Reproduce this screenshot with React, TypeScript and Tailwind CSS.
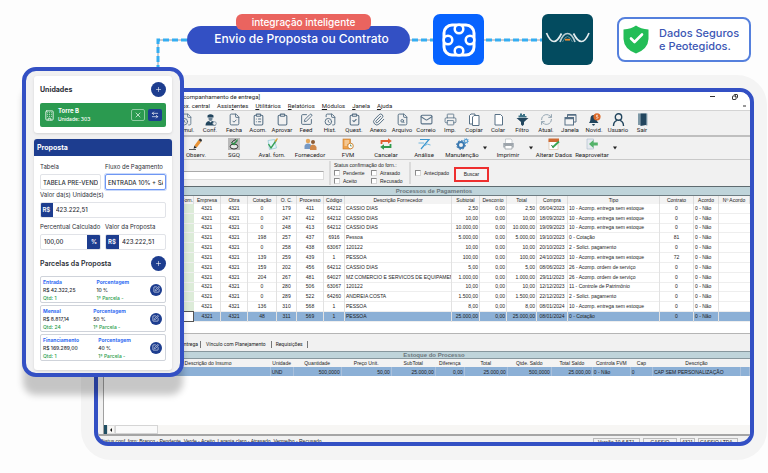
import { ArrowLeftRight, Building, Clipboard, ClipboardCheck, ClipboardList, Copy, FileCheck, FileClock, FileSearch, Mail, Paperclip, Plus, Printer, RefreshCw, SquarePen, UserRound, X } from "lucide-react";

const rows = [
    ["4321", "4321", "0", "179", "411", "64212", "CASSIO DIAS", "2,50", "0,00", "2,50", "06/04/2023", "10 - Acomp. entrega sem estoque", "0", "0 - Não"],
    ["4321", "4321", "0", "247", "412", "64212", "CASSIO DIAS", "10,00", "0,00", "10,00", "18/09/2023", "10 - Acomp. entrega sem estoque", "0", "0 - Não"],
    ["4321", "4321", "0", "248", "413", "64212", "CASSIO DIAS", "10.000,00", "0,00", "10.000,00", "19/09/2023", "10 - Acomp. entrega sem estoque", "0", "0 - Não"],
    ["4321", "4321", "198", "257", "437", "6916", "Pessoa", "5.000,00", "0,00", "5.000,00", "19/10/2023", "0 - Cotação", "81", "0 - Não"],
    ["4321", "4321", "0", "258", "438", "63067", "120122", "10,00", "0,00", "10,00", "20/10/2023", "2 - Solict. pagamento", "0", "0 - Não"],
    ["4321", "4321", "139", "259", "439", "1", "PESSOA", "100,00", "0,00", "100,00", "24/10/2023", "10 - Acomp. entrega sem estoque", "72", "0 - Não"],
    ["4321", "4321", "159", "202", "456", "64212", "CASSIO DIAS", "5,00", "0,00", "5,00", "08/06/2023", "26 - Acomp. ordem de serviço", "0", "0 - Não"],
    ["4321", "4321", "204", "267", "481", "64027", "MZ COMERCIO E SERVICOS DE EQUIPAMEN", "1.000,00", "0,00", "1.000,00", "29/11/2023", "26 - Acomp. ordem de serviço", "0", "0 - Não"],
    ["4321", "4321", "0", "280", "506", "63067", "120122", "10,00", "0,00", "10,00", "12/12/2023", "11 - Controle de Patrimônio", "0", "0 - Não"],
    ["4321", "4321", "0", "289", "522", "64260", "ANDREIA COSTA", "1.500,00", "0,00", "1.500,00", "22/12/2023", "2 - Solict. pagamento", "0", "0 - Não"],
    ["4321", "4321", "136", "310", "568", "1", "PESSOA", "8,00", "0,00", "8,00", "08/01/2024", "10 - Acomp. entrega sem estoque", "0", "0 - Não"],
    ["4321", "4321", "48", "311", "569", "1", "PESSOA", "25.000,00", "0,00", "25.000,00", "08/01/2024", "0 - Cotação", "0", "0 - Não"],
];

const columns = [
    { name: "Forn.", width: "w-[95px]", align: "text-right" },
    { name: "Empresa", width: "w-[27px]", align: "text-center" },
    { name: "Obra", width: "w-[27px]", align: "text-center" },
    { name: "Cotação", width: "w-[29px]", align: "text-center" },
    { name: "O. C.", width: "w-[20px]", align: "text-center" },
    { name: "Processo", width: "w-[27px]", align: "text-center" },
    { name: "Código", width: "w-[21px]", align: "text-center" },
    { name: "Descrição Fornecedor", width: "w-[107px]", align: "text-left" },
    { name: "Subtotal", width: "w-[28px]", align: "text-right" },
    { name: "Desconto", width: "w-[27px]", align: "text-right" },
    { name: "Total", width: "w-[30px]", align: "text-right" },
    { name: "Compra", width: "w-[31px]", align: "text-center" },
    { name: "Tipo", width: "w-[92px]", align: "text-left" },
    { name: "Contrato", width: "w-[34px]", align: "text-center" },
    { name: "Acordo", width: "w-[25px]", align: "text-left" },
    { name: "Nº Acordo", width: "w-[31px]", align: "text-left" },
];

const stock = [
    { name: "", value: "", width: "w-[42px]", align: "text-left" },
    { name: "Descrição do Insumo", value: "", width: "w-[124px]", align: "text-left" },
    { name: "Unidade", value: "UND", width: "w-[23px]", align: "text-left" },
    { name: "Quantidade", value: "500,0000", width: "w-[48px]", align: "text-right" },
    { name: "Preço Unit.", value: "50,00", width: "w-[50px]", align: "text-right" },
    { name: "SubTotal", value: "25.000,00", width: "w-[44px]", align: "text-right" },
    { name: "Diferença", value: "0,00", width: "w-[29px]", align: "text-right" },
    { name: "Total", value: "25.000,00", width: "w-[43px]", align: "text-right" },
    { name: "Qtde. Saldo", value: "500,0000", width: "w-[44px]", align: "text-right" },
    { name: "Total Saldo", value: "25.000,00", width: "w-[41px]", align: "text-right" },
    { name: "Controla FVM", value: "0 - Não", width: "w-[38px]", align: "text-left" },
    { name: "Cap", value: "0", width: "w-[22px]", align: "text-left" },
    { name: "Descrição", value: "CAP SEM PERSONALIZAÇÃO", width: "w-[88px]", align: "text-left" },
    { name: "", value: "", width: "w-[9px]", align: "text-left" },
];

const parcelas = [
    { name: "Entrada", value: "R$ 42.322,25", qtd: 1, percent: "10 %" },
    { name: "Mensal", value: "R$ 8.817,14", qtd: 24, percent: "50 %" },
    { name: "Financiamento", value: "R$ 169.289,00", qtd: 1, percent: "40 %" },
];

const slate = "size-[13px] text-[#587186]";

const ConfIcon = () => (
    <svg viewBox="0 0 13 13" className="size-[13px]">
        <path d="M3.5 2.5Q6.5 0 9.5 2.5V4.500H3.500Z" fill="#23465e" />
        <path d="M4.500 4.500H8.500V6Q8.500 8 6.500 8T4.500 6Z" fill="#6d8496" />
        <path d="M1.500 12.500Q1.500 8.500 5 8L6.500 9.500L8 8Q11.500 8.500 11.500 12.500Z" fill="#23465e" />
        <circle cx="10.500" cy="10.500" r="1.800" fill="#f1f1f1" stroke="#6d8496" strokeWidth=".7" />
    </svg>
);

const FilterIcon = () => (
    <svg viewBox="0 0 13 13" className="size-[13px]">
        <path d="M.5 5H12.500L8 9V11.500L6.500 13L5 11.500V9Z" fill="#23465e" />
        <path d="M4 .5H6V2H7V1H9V3H10.500V4.500H2.500V2.500H4Z" fill="#3c7387" />
    </svg>
);

const WindowIcon = () => (
    <svg viewBox="0 0 13 13" className="size-[13px]" fill="none" stroke="#587186">
        <path d="M3.500 4V1.500H12V9H10" />
        <path d="M3.500 2H12" strokeWidth="1.500" />
        <rect x="1" y="4.500" width="8.500" height="7.500" fill="#f4f4f4" />
        <path d="M1 5.500H9.500" strokeWidth="1.500" />
    </svg>
);

const BellIcon = () => (
    <svg viewBox="0 0 14 13" className="h-[13px] w-[14px]">
        <path d="M2 10Q3.500 8.500 3.500 5.500Q3.500 2 6.500 2T9.500 5.500Q9.500 8.500 11.500 10Z" fill="#23465e" />
        <path d="M5 11H8Q7.500 12.800 6.500 12.800T5 11Z" fill="#23465e" />
        <circle cx="10" cy="3.800" r="3.600" fill="#dc6a2b" />
        <path d="M11 2.300H9.500V3.600Q11 3.500 11 4.500T9.300 5.300" fill="none" stroke="#fff" strokeWidth=".7" />
    </svg>
);

const UserIcon = () => (
    <svg viewBox="0 0 13 13" className="size-[13px]" fill="none" stroke="#23465e" strokeWidth="1.400">
        <circle cx="6.500" cy="4" r="3.200" />
        <path d="M1.500 13Q1.500 8.500 5 7.300M11.500 13Q11.500 8.500 8 7.300" />
    </svg>
);

const DoorIcon = () => (
    <svg viewBox="0 0 13 13" className="size-[13px]">
        <rect x="2" y=".5" width="9" height="11.500" fill="#9fb3bf" />
        <path d="M4.500 .5H10V12L4.500 13Z" fill="#23465e" />
        <path d="M3 .5V12M10.800 .5V12.500" stroke="#4d6f82" strokeWidth=".8" />
    </svg>
);

const PageIcon = () => (
    <svg viewBox="0 0 13 13" className="size-[13px]" fill="#fff" stroke="#587186">
        <path d="M3 1.500H8.500L10.500 3.500V12H3Z" />
    </svg>
);

const CopyIcon = () => (
    <svg viewBox="0 0 13 13" className="size-[13px]" fill="#fff" stroke="#587186">
        <path d="M1.500 2.500L3 1H7V11H1.500Z" />
        <path d="M4.500 4L6 2.500H11V12.500H4.500Z" />
    </svg>
);

const mainTools = [
    { label: "Simul.", icon: <FileClock className={slate} strokeWidth={1.5} /> },
    { label: "Conf.", icon: <ConfIcon /> },
    { label: "Fecha", icon: <FileCheck className={slate} strokeWidth={1.8} /> },
    { label: "Acom.", icon: <ClipboardList className={slate} strokeWidth={2} /> },
    { label: "Aprovar", icon: <Clipboard className={slate} strokeWidth={2} /> },
    { label: "Feed", icon: <SquarePen className={slate} strokeWidth={1.8} /> },
    { label: "Hist.", icon: <FileClock className={slate} strokeWidth={1.8} /> },
    { label: "Quest.", icon: <ClipboardCheck className={slate} strokeWidth={2} /> },
    { label: "Anexo", icon: <Paperclip className={slate} strokeWidth={1.8} /> },
    { label: "Arquivo", icon: <FileSearch className={slate} strokeWidth={1.8} /> },
    { label: "Correio", icon: <Mail className={slate} strokeWidth={2} /> },
    { label: "Imp.", icon: <Printer className={slate} strokeWidth={1.5} /> },
    { label: "Copiar", icon: <CopyIcon /> },
    { label: "Colar", icon: <PageIcon /> },
    { label: "Filtro", icon: <FilterIcon /> },
    { label: "Atual.", icon: <RefreshCw className="size-[13px] text-[#8a9cab]" strokeWidth={1.8} strokeDasharray="4 2" /> },
    { label: "Janela", icon: <WindowIcon /> },
    { label: "Novid.", icon: <BellIcon /> },
    { label: "Usuario", icon: <UserIcon /> },
    { label: "Sair", icon: <DoorIcon /> },
];

const PencilIcon = () => (
    <svg viewBox="0 0 14 12" className="h-[12px] w-[14px]">
        <path d="M0 11.500H7" stroke="#333" strokeWidth=".8" />
        <path d="M4.500 10.800L5.500 7.500L7.800 9.500Z" fill="#222" />
        <path d="M5.500 7.500L9.500 2L12 4L7.800 9.500Z" fill="#e89235" />
        <path d="M9.500 2L11 .5Q13 .8 13 2.500L12 4Z" fill="#333" />
    </svg>
);

const SgqIcon = () => (
    <svg viewBox="0 0 12 12" className="size-[12px]">
        <rect width="12" height="12" fill="#b9b9b9" />
        <ellipse cx="6" cy="8.500" rx="3.800" ry="2.500" fill="#e8e8e8" stroke="#333" />
        <path d="M3.500 5Q5 2 8 1.500M5 6L9.500 3" stroke="#333" fill="none" />
        <path d="M3.500 4.500L6 6.500L9.500 1.500" stroke="#2f9a4c" strokeWidth="1.300" fill="none" />
    </svg>
);

const AvalIcon = () => (
    <svg viewBox="0 0 12 12" className="size-[12px]">
        <path d="M2 2.500L8.500 1.500L10.500 10L3.500 11.500Z" fill="#e4f3f7" stroke="#8fc6d2" strokeWidth=".7" />
        <path d="M2.500 6L5 10L10.500 2" stroke="#38a058" strokeWidth="1.400" fill="none" />
        <path d="M9 3.500L11.500 .5" stroke="#e0a23a" strokeWidth="1.200" />
    </svg>
);

const PeopleIcon = () => (
    <svg viewBox="0 0 13 12" className="h-[12px] w-[13px]">
        <circle cx="4" cy="3" r="2.200" fill="#e3a65b" />
        <path d="M.5 11V8Q1 5.500 4 5.500T7.500 8V11Z" fill="#7699c4" />
        <circle cx="9" cy="4" r="2" fill="#8c5a33" />
        <path d="M6 12V9Q6.500 6.500 9 6.500T12.500 9V12Z" fill="#d0884a" />
    </svg>
);

const FvmIcon = () => (
    <svg viewBox="0 0 12 12" className="size-[12px]">
        <rect x="1" y="1" width="7.500" height="10" fill="#efa24a" stroke="#c27526" strokeWidth=".6" />
        <path d="M2.500 3H7M2.500 5H7M2.500 7H5" stroke="#fff" strokeWidth=".8" />
        <circle cx="8.500" cy="8" r="2.800" fill="#fff" stroke="#cf8a3a" />
        <path d="M8.500 6.500V8H9.800" stroke="#3b7a48" fill="none" strokeWidth=".7" />
    </svg>
);

const CancelIcon = () => (
    <svg viewBox="0 0 12 12" className="size-[12px]" fill="none" strokeWidth="1.800">
        <path d="M1.500 6V3H9" stroke="#e0602f" />
        <path d="M8 .3L11.800 3L8 5.700Z" fill="#e0602f" />
        <path d="M10.500 6V9H3.500" stroke="#2f9a4c" />
        <path d="M4 6.300L.2 9L4 11.700Z" fill="#2f9a4c" />
    </svg>
);

const AnalysisIcon = () => (
    <svg viewBox="0 0 13 12" className="h-[12px] w-[13px]" fill="none" stroke="#3c97cf">
        <path d="M2 1.500H11L3 11" strokeWidth="1.200" />
        <path d="M.5 5H6M7 7.500Q9 5 12.500 7" stroke="#74b8df" />
    </svg>
);

const GearsIcon = () => (
    <svg viewBox="0 0 13 12" className="h-[12px] w-[13px]" fill="none">
        <circle cx="5" cy="7" r="3" stroke="#3a78b0" strokeWidth="2" />
        <circle cx="5" cy="7" r="4.400" stroke="#3a78b0" strokeDasharray="1.700 1.700" />
        <circle cx="10" cy="3" r="1.600" stroke="#5ba0d3" strokeWidth="1.300" />
        <circle cx="10" cy="3" r="2.600" stroke="#5ba0d3" strokeWidth=".8" strokeDasharray="1 1" />
    </svg>
);

const PrintIcon = () => (
    <svg viewBox="0 0 13 12" className="h-[12px] w-[13px]">
        <path d="M3.500 5V1H9L10 2V5" fill="#fff" stroke="#b5bcc2" strokeWidth=".7" />
        <path d="M1 5H12V9.500H1Z" fill="#b3bac0" />
        <path d="M3 7.500H10V11H3Z" fill="#fff" stroke="#888f95" strokeWidth=".7" />
        <path d="M2 6H11" stroke="#7e868d" strokeWidth=".8" />
    </svg>
);

const AlterIcon = () => (
    <svg viewBox="0 0 12 12" className="size-[12px]">
        <rect x="1" y="2" width="9" height="9.500" fill="#fff" stroke="#d5b79c" strokeWidth=".6" />
        <path d="M.5 .5H11V4H.5Z" fill="#cf6a33" />
        <path d="M4.500 9.500L11 3.500" stroke="#3aa655" strokeWidth="1.800" />
        <path d="M3.500 7L5 9.500" stroke="#2f7d43" />
    </svg>
);

const ReuseIcon = () => (
    <svg viewBox="0 0 12 12" className="size-[12px]">
        <path d="M1 1H7.500V11H1Z" fill="#e6eaf0" stroke="#a9b8cb" strokeWidth=".6" />
        <path d="M3 6L7.500 2V4.500H11.800V7.500H7.500V10Z" fill="#55b36a" />
    </svg>
);

const processTools = [
    { label: "Observ.", icon: <PencilIcon /> },
    { label: "SGQ", icon: <SgqIcon /> },
    { label: "Aval. forn.", icon: <AvalIcon /> },
    { label: "Fornecedor", icon: <PeopleIcon /> },
    { label: "FVM", icon: <FvmIcon /> },
    { label: "Cancelar", icon: <CancelIcon /> },
    { label: "Análise", icon: <AnalysisIcon /> },
    { label: "Manutenção", icon: <GearsIcon />, menu: true },
    { label: "Imprimir", icon: <PrintIcon />, menu: true },
    { label: "Alterar Dados", icon: <AlterIcon /> },
    { label: "Reaproveitar", icon: <ReuseIcon />, menu: true },
];

function Connector({ className }: { className: string }) {
    return (
        <svg className={className}>
            <line x1="0" y1="2" x2="100%" y2="2" stroke="#9a9aa2" strokeWidth="1" />
            <line x1="0" y1="2" x2="100%" y2="2" stroke="#35aef2" strokeWidth="3" strokeDasharray="6 3" strokeDashoffset="-2" />
        </svg>
    );
}

function Header() {
    return (
        <header className="flex h-[67px] items-start pt-3.5 pr-[17px] pl-[156px]">
            <svg viewBox="0 0 31 29" className="h-[29px] w-[31px] shrink-0 self-end" fill="none">
                <path d="M31 2H2V29" stroke="#9a9aa2" />
                <path d="M31 2H2V29" stroke="#35aef2" strokeWidth="3" strokeDasharray="6 3" />
            </svg>
            <div className="flex h-[51px] items-center">
                <div className="relative flex h-7 w-[223px] items-center justify-center rounded-full bg-[#3350c4] pb-0.5 pl-1.5">
                    <h1 className="font-[Inter,sans-serif] text-[12px] leading-4 font-medium text-white">Envio de Proposta ou Contrato</h1>
                    <span className="absolute -top-3 left-[49px] flex h-4 w-[135px] items-center justify-center rounded-md bg-[#ea645f] font-[Inter,sans-serif] text-[10px] leading-3 font-medium text-white">
                        integração inteligente
                    </span>
                </div>
                <Connector className="h-1 w-[23px]" />
                <svg viewBox="0 0 51 51" className="size-[51px]" fill="none" stroke="#fff">
                    <rect width="51" height="51" rx="7" fill="#0763ff" stroke="none" />
                    <rect x="11" y="11" width="30" height="30" rx="8" strokeWidth="3" />
                    <g strokeWidth="2.500" fill="#0763ff">
                        <circle cx="26" cy="15" r="4.300" />
                        <circle cx="26" cy="37" r="4.300" />
                        <circle cx="15" cy="26" r="4.300" />
                        <circle cx="37" cy="26" r="4.300" />
                    </g>
                </svg>
                <Connector className="h-1 w-[58px]" />
                <svg viewBox="0 0 51 51" className="size-[51px]" fill="none" strokeWidth="1.700">
                    <rect width="51" height="51" rx="6" fill="#034b5f" />
                    <path d="M4.500 19Q8 27.500 12 27.500Q15.500 27.500 19.500 19.500" stroke="#e4ecee" />
                    <path d="M18 28Q21 19.500 25.500 19.500T33 28" stroke="#b9cdd3" />
                    <path d="M20.500 28Q23 22.500 25.500 22.500T30.500 28" stroke="#6f97a3" strokeWidth=".8" />
                    <path d="M31.500 19.500Q35.500 27.500 39.500 27.500T47 19" stroke="#e4ecee" />
                    <path d="M23 25.700H28" stroke="#f08a2e" strokeWidth="1.800" />
                </svg>
            </div>
            <div className="mt-[3px] ml-auto flex h-[45px] w-[134px] items-center gap-2.5 rounded-lg border-2 border-[#5580dd] bg-white pl-1">
                <svg viewBox="0 0 26 29" className="h-[29px] w-[26px] shrink-0">
                    <path d="M13 .5Q17.500 4 25.500 4.500V14Q25 24 13 28.500Q1 24 .5 14V4.500Q8.500 4 13 .5Z" fill="#23bd57" />
                    <path d="M8 13.500L11.500 17L19 9.500" fill="none" stroke="#fff" strokeWidth="2.600" strokeLinecap="round" strokeLinejoin="round" />
                </svg>
                <p className="font-[Inter,sans-serif] text-[11px] leading-[13px] font-medium whitespace-nowrap text-[#3b56b4]">
                    Dados Seguros
                    <br />e Peotegidos.
                </p>
            </div>
        </header>
    );
}

function ProposalPanel() {
    return (
        <aside className="z-10 ml-[22px] w-[162px] self-start rounded-[14px] border-4 border-[#3350c4] bg-[#f1f1f2] px-2 pt-[5px] pb-[3px] font-[Inter,sans-serif] text-[6px] leading-[8px] text-[#2b2e36] shadow-[0_19px_7px_-1px_rgba(0,0,0,0.22)] [grid-area:1/1]">
            <section className="rounded-[3px] bg-white px-1.5 pt-1.5 pb-1.5 shadow-sm">
                <div className="flex items-center justify-between">
                    <h2 className="text-[7px] font-bold">Unidades</h2>
                    <button aria-label="Adicionar unidade" className="flex size-[15px] items-center justify-center rounded-full bg-[#1d3d8f] text-white">
                        <Plus className="size-[7px]" />
                    </button>
                </div>
                <div className="mt-1.5 flex h-6 items-center gap-[3px] rounded-[2px] bg-[#2b9a50] px-1 text-white">
                    <Building className="size-[11px]" strokeWidth={1.8} />
                    <div className="flex-1">
                        <h3 className="font-bold">Torre B</h3>
                        <p className="text-[5px] font-medium">Unidade: 303</p>
                    </div>
                    <button aria-label="Remover" className="flex h-3 w-3.5 items-center justify-center rounded-[2px] border border-[#8fcba2]">
                        <X className="size-[8px]" />
                    </button>
                    <button aria-label="Trocar" className="flex h-3 w-3.5 items-center justify-center rounded-[2px] bg-[#1d3d8f]">
                        <ArrowLeftRight className="size-[8px]" />
                    </button>
                </div>
            </section>

            <section className="mt-1.5 overflow-hidden rounded-[3px] bg-white shadow-sm">
                <h2 className="bg-[#1d3d8f] px-[3px] py-[5px] text-[7px] leading-[7px] font-bold text-white">Proposta</h2>
                <div className="px-1.5 pt-[7px] pb-2">
                    <div className="grid grid-cols-2 gap-1">
                        <label className="flex flex-col gap-[3px]">
                            Tabela
                            <input defaultValue="TABELA PRÉ-VENDA" className="h-4 w-full rounded-[2px] border border-[#e1e3e8] px-0.5 font-medium" />
                        </label>
                        <label className="flex flex-col gap-[3px] whitespace-nowrap">
                            Fluxo de Pagamento
                            <input defaultValue="ENTRADA 10% + SA" className="h-4 w-full rounded-[2px] border border-[#6f97f3] px-0.5 font-medium ring-1 ring-[#c9d9fb]" />
                        </label>
                    </div>
                    <label htmlFor="valorUnidade" className="mb-[3px] block leading-[9px]">Valor da(s) Unidade(s)</label>
                    <div className="flex h-4 overflow-hidden rounded-[2px] border border-[#e1e3e8]">
                        <span className="-my-px -ml-px flex w-3.5 items-center justify-center bg-[#1d3d8f] font-semibold text-white">R$</span>
                        <input id="valorUnidade" defaultValue="423.222,51" className="w-full min-w-0 px-[3px] font-medium" />
                    </div>
                    <div className="mt-[5px] grid grid-cols-2 gap-1 whitespace-nowrap">
                        <div>
                            <label htmlFor="percentual" className="mb-[3px] block">Percentual Calculado</label>
                            <div className="flex h-4 overflow-hidden rounded-[2px] border border-[#e1e3e8]">
                                <input id="percentual" defaultValue="100,00" className="w-full min-w-0 px-[3px] font-medium" />
                                <span className="-my-px -mr-px flex w-3.5 shrink-0 items-center justify-center bg-[#1d3d8f] font-semibold text-white">%</span>
                            </div>
                        </div>
                        <div>
                            <label htmlFor="valorProposta" className="mb-[3px] block">Valor da Proposta</label>
                            <div className="flex h-4 overflow-hidden rounded-[2px] border border-[#e1e3e8]">
                                <span className="-my-px -ml-px flex w-3.5 shrink-0 items-center justify-center bg-[#1d3d8f] font-semibold text-white">R$</span>
                                <input id="valorProposta" defaultValue="423.222,51" className="w-full min-w-0 px-[3px] font-medium" />
                            </div>
                        </div>
                    </div>
                    <div className="mt-1.5 mb-[5px] flex items-center justify-between">
                        <h3 className="text-[7px] font-semibold">Parcelas da Proposta</h3>
                        <button aria-label="Adicionar parcela" className="flex size-[15px] items-center justify-center rounded-full bg-[#1d3d8f] text-white">
                            <Plus className="size-[7px]" />
                        </button>
                    </div>
                    <ul className="flex flex-col gap-0.5 pb-px text-[5px]">
                        {parcelas.map((p) => (
                            <li key={p.name} className="flex h-[27px] items-center justify-between rounded-[2px] border border-[#cfd3da] pr-[3px] pl-0.5 font-medium">
                                <div>
                                    <p className="font-bold text-[#2f6bf2]">{p.name}</p>
                                    <p>{p.value}</p>
                                    <p className="text-[#2a9d4c]">Qtd: {p.qtd}</p>
                                </div>
                                <div>
                                    <p className="font-bold text-[#2f6bf2]">Porcentagem</p>
                                    <p>{p.percent}</p>
                                    <p className="text-[#2a9d4c]">1ª Parcela -</p>
                                </div>
                                <button aria-label={"Editar " + p.name} className="flex size-3 items-center justify-center rounded-full bg-[#1d3d8f] text-white">
                                    <SquarePen className="size-[7px]" />
                                </button>
                            </li>
                        ))}
                    </ul>
                </div>
            </section>
        </aside>
    );
}

function Check({ label }: { label: string }) {
    return (
        <label className="flex items-center gap-[3px]">
            <input type="checkbox" className="size-[6px] appearance-none border border-[#d8d8d8] border-t-[#8a8a8a] border-l-[#8a8a8a] bg-white" />
            {label}
        </label>
    );
}

function ErpWindow() {
    return (
        <div className="mt-2 mr-0.5 ml-[81px] self-start rounded-[30px] bg-[#f4f4f4] p-[13px] pb-3.5 [grid-area:1/1]">
            <div className="overflow-hidden rounded-[14px] border-4 border-[#3350c4] bg-[#f1f1f1] font-[Roboto,sans-serif] text-[6px] leading-[8px] whitespace-nowrap text-[#1c1c1c]">
                <div className="flex h-[9px] items-center bg-white pr-3">
                    <p className="w-[162px] text-right">[Acompanhamento de entrega]</p>
                    <div className="ml-auto flex items-center gap-[17px]">
                        <span className="h-px w-[5px] bg-[#333]" />
                        <Copy className="size-[6px] -scale-x-100" strokeWidth={3.5} />
                    </div>
                </div>
                <nav className="flex h-[10px] items-center gap-[7px] border-b border-[#d4d4d4] bg-white pr-1">
                    <a href="#central" className="w-[112px] text-right">Aprox. central</a>
                    <a href="#assistentes">Assis<u>t</u>entes</a>
                    <a href="#utilitarios"><u>U</u>tilitários</a>
                    <a href="#relatorios"><u>R</u>elatórios</a>
                    <a href="#modulos"><u>M</u>ódulos</a>
                    <a href="#janela"><u>J</u>anela</a>
                    <a href="#ajuda"><u>A</u>juda</a>
                    <span className="ml-auto h-[2px] w-[3px] bg-[#999]" />
                </nav>

                <div className="flex h-[26px] border-b-2 border-[#bfbfbf] pl-[76px]">
                    {mainTools.map((tool) => (
                        <button key={tool.label} className="flex w-6 shrink-0 flex-col items-center pt-[2px]">
                            {tool.icon}
                            <span>{tool.label}</span>
                        </button>
                    ))}
                </div>
                <div className="flex h-[23px] border-b border-[#c9c9c9] pl-[79px]">
                    {processTools.map((tool) => (
                        <div key={tool.label} className="flex items-center">
                            <button className="flex w-[38px] flex-col items-center">
                                {tool.icon}
                                <span className="mt-px">{tool.label}</span>
                            </button>
                            {tool.menu && (
                                <svg viewBox="0 0 8 4" className="h-1 w-2">
                                    <path d="M2 .5H6L4 3.500Z" fill="#222" />
                                </svg>
                            )}
                        </div>
                    ))}
                </div>

                <form className="flex h-[27px] items-center border-b border-[#5f6b70] font-['Liberation_Sans',sans-serif] text-[5px]">
                    <input aria-label="Pesquisa" className="mt-1 ml-[20px] h-[9px] w-[206px] border border-[#dcdcdc] border-t-[#aaa] bg-white" />
                    <fieldset className="ml-[5px] w-[80px] border-l-2 border-[#dadada] pl-[3px]">
                        <legend className="float-left w-full">Status confirmação do forn.:</legend>
                        <div className="grid w-[74px] grid-cols-2">
                            <Check label="Pendente" />
                            <Check label="Atrasado" />
                            <Check label="Aceito" />
                            <Check label="Recusado" />
                        </div>
                    </fieldset>
                    <div className="flex h-[22px] w-[45px] items-center border-l-2 border-[#dadada] pl-[4px]">
                        <Check label="Antecipado" />
                    </div>
                    <button type="button" className="mt-0.5 h-[15px] w-[35px] border-2 border-[#ee2f2f] bg-[#f4f4f4]">Buscar</button>
                </form>

                <h2 className="h-[9px] border-b border-[#6d7c82] bg-[#bfd4da] pl-5 text-center font-['Liberation_Sans',sans-serif] font-bold text-[#6b777c]">Processos de Pagamentos</h2>
                <div className="bg-white pb-[11px] font-['Liberation_Sans',sans-serif] text-[5px]">
                    <table className="h-[126px] w-full table-fixed border-collapse">
                        <thead>
                            <tr className="h-[8px] bg-[#f3f3f3]">
                                {columns.map((c) => (
                                    <th key={c.name} className={`${c.width} border-r border-[#dcdcdc] p-0 text-center font-normal first:text-right`}>{c.name}</th>
                                ))}
                            </tr>
                        </thead>
                        <tbody>
                            {rows.map((row, i) => (
                                <tr key={i} className="border-b border-[#eeeeee] last:bg-[#8cb0d6]">
                                    <td className={i === rows.length - 1 ? "border border-[#555] bg-white p-0" : "bg-[#dcebd8] p-0"} />
                                    {row.map((cell, j) => (
                                        <td key={j} className={`${columns[j + 1].align} overflow-hidden border-r border-[#e2e2e2] px-px py-0 leading-[7px]`}>{cell}</td>
                                    ))}
                                    <td className="p-0" />
                                </tr>
                            ))}
                        </tbody>
                    </table>
                </div>

                <div className="flex h-[18px] items-center border-t border-[#b5b5b5] pt-[3px] text-[5px]">
                    <button className="w-[103px] border-r border-[#777] pr-0.5 text-right leading-[7px]">Itens entrega</button>
                    <button className="border-r border-[#777] px-[5px] leading-[7px]">Vínculo com Planejamento</button>
                    <button className="border-r border-[#777] px-1 leading-[7px]">Requisições</button>
                </div>
                <h2 className="h-[8px] border-y border-[#87979d] bg-[#bfd4da] pl-5 text-center font-['Liberation_Sans',sans-serif] leading-[6px] font-bold text-[#6b777c]">Estoque do Processo</h2>
                <div className="ml-[5px] border-l border-[#a0a0a0] bg-white font-['Liberation_Sans',sans-serif] text-[5px]">
                    <table className="w-full table-fixed border-collapse">
                        <thead>
                            <tr className="h-[8px] bg-[#f3f3f3]">
                                {stock.map((c, i) => (
                                    <th key={i} className={`${c.width} p-0 text-center font-normal`}>{c.name}</th>
                                ))}
                            </tr>
                        </thead>
                        <tbody>
                            <tr className="h-[9px] bg-[#8cb0d6]">
                                {stock.map((c, i) => (
                                    <td key={i} className={`${c.align} border-r border-[#a9c0dc] px-px py-0`}>{c.value}</td>
                                ))}
                            </tr>
                        </tbody>
                    </table>
                    <div className="mt-[49px] flex h-[9px] bg-[#f7f6f4]">
                        <span className="w-[3px] bg-[#1f4e63]" />
                        <span className="flex w-[8px] items-center justify-center border border-[#dedede] text-[#111]">
                            <svg viewBox="0 0 4 4" className="size-1"><path d="M3 0V4L1 2Z" fill="currentColor" /></svg>
                        </span>
                        <span className="w-[43px] border border-[#d5d5d5] bg-[#fafafa]" />
                    </div>
                </div>
                <footer className="flex h-[8px] gap-[3px] overflow-hidden border-t-2 border-[#a5a5a5] pr-3 pl-[2px] font-['Liberation_Sans',sans-serif] text-[5px] leading-[11px]">
                    <p className="mr-auto">Status conf. forn: Branco - Pendente, Verde - Aceito, Laranja claro - Atrasado, Vermelho - Recusado</p>
                    <span className="mt-[2px] w-[47px] border border-b-0 border-[#bbb] pl-1 leading-[7px]">Versão 10.6.571</span>
                    <span className="mt-[2px] w-[34px] border border-b-0 border-[#bbb] text-center leading-[7px]">CASSIO</span>
                    <span className="mt-[2px] w-[15px] border border-b-0 border-[#bbb] text-center leading-[7px]">4321</span>
                    <span className="mt-[2px] w-[40px] border border-b-0 border-[#bbb] pl-px leading-[7px]">CASSIO LTDA</span>
                </footer>
            </div>
        </div>
    );
}

export default function App() {
    return (
        <main className="min-h-screen bg-[#fdfdfd]">
            <Header />
            <div className="grid">
                <ErpWindow />
                <ProposalPanel />
            </div>
        </main>
    );
}
